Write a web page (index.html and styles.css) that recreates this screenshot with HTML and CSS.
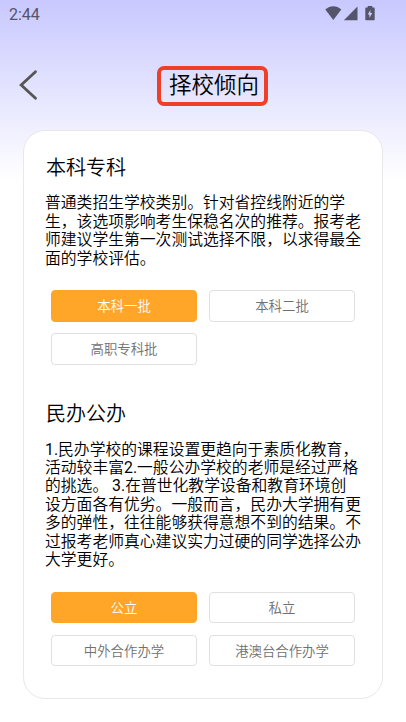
FILE: index.html
```
<!DOCTYPE html>
<html lang="zh-CN">
<head>
    <meta charset="UTF-8">
    <meta name="viewport" content="width=device-width, initial-scale=1.0">
    <title>择校倾向</title>
    <link rel="stylesheet" href="styles.css">
</head>
<body>
<div class="page">
    <!-- 状态栏 -->
    <div class="status">
        <span class="time">2:44</span>
        <svg class="statusIcons" width="50" height="16" viewBox="0 0 50 16">
            <path d="M0.3 3.6C4.8-0.9 11.8-0.9 16.3 3.6L8.3 14z"/>
            <path d="M32.5 0.6V14.2H18.9z"/>
            <path fill-rule="evenodd" d="M41 1.6h1.7V0h4.6v1.6h1.7a.7.7 0 0 1 .7.7v11.2a.7.7 0 0 1-.7.7h-8a.7.7 0 0 1-.7-.7V2.3a.7.7 0 0 1 .7-.7zM45.4 3.9L42.7 8.6h1.7v3.5l2.900-5.100h-1.900z"/>
        </svg>
    </div>

    <!-- 标题栏 -->
    <div class="header">
        <svg class="back" width="20" height="32" viewBox="0 0 20 32">
            <path d="M16.5 2.8L2.2 16L16.5 29.2"/>
        </svg>
        <h1 class="title">择校倾向</h1>
    </div>

    <div class="card">
        <h2 class="name">本科专科</h2>
        <p class="desc">普通类招生学校类别。针对省控线附近的学<br>生，该选项影响考生保稳名次的推荐。报考老<br>师建议学生第一次测试选择不限，以求得最全<br>面的学校评估。</p>
        <div class="options">
            <button class="opt active">本科一批</button>
            <button class="opt">本科二批</button>
            <button class="opt">高职专科批</button>
        </div>

        <h2 class="name second">民办公办</h2>
        <p class="desc"><span class="num">1.</span>民办学校的课程设置更趋向于素质化教育，<br>活动较丰富<span class="num">2.</span>一般公办学校的老师是经过严格<br>的挑选。<span class="num"> 3.</span>在普世化教学设备和教育环境创<br>设方面各有优劣。一般而言，民办大学拥有更<br>多的弹性，往往能够获得意想不到的结果。不<br>过报考老师真心建议实力过硬的同学选择公办<br>大学更好。</p>
        <div class="options typeOptions">
            <button class="opt active">公立</button>
            <button class="opt">私立</button>
            <button class="opt">中外合作办学</button>
            <button class="opt">港澳台合作办学</button>
        </div>
    </div>
</div>
</body>
</html>
```
FILE: styles.css
```
*{
    box-sizing: border-box;
}
body{
    margin: 0;
    background-color: #fff;
    color: #000;
    font-family: Roboto, "Noto Sans CJK SC", sans-serif;
    font-weight: 350;
}
.page{
    height: 722px;
    overflow: hidden;
    background: linear-gradient(#c8c8ff 0, #fff 180px) no-repeat;
}
.status{
    display: flex;
    justify-content: space-between;
    height: 28px;
    padding: 6px 31px 0 9px;
    color: #54546b;
}
.time{
    font-size: 16px;
    font-weight: 400;
    line-height: 17px;
}
.statusIcons{
    fill: #54546b;
}
.header{
    display: flex;
    align-items: center;
    height: 102px;
    padding: 10px 0 0 19px;
}
.back{
    margin-top: 1px;
    fill: none;
    stroke: #555;
    stroke-width: 2.8;
    stroke-linecap: round;
}
.title{
    width: 111px;
    height: 40px;
    margin: 4px 0 0 118px;
    padding-left: 3px;
    border: 4px solid #ee3f28;
    border-radius: 7px;
    font-size: 22.5px;
    font-weight: 350;
    line-height: 31px;
    text-align: center;
}
.card{
    width: 360px;
    height: 569px;
    margin-left: 23px;
    padding: 22px 0 0 21px;
    border: 1px solid #e8e8e8;
    border-radius: 22px;
    background-color: #fff;
}
.name{
    margin: 0;
    padding-left: 1px;
    font-size: 20px;
    font-weight: 350;
    line-height: 30px;
}
.second{
    margin-top: 34px;
}
.desc{
    margin: 11.4px 0 0;
    font-size: 15.8px;
    line-height: 18.4px;
    white-space: nowrap;
}
.second + .desc{
    margin-top: 12px;
}
.num{
    font-weight: 400;
}
.options{
    display: grid;
    grid-template-columns: 146px 146px;
    grid-auto-rows: 32px;
    gap: 11px 12px;
    margin: 21.6px 0 0 6px;
}
.typeOptions{
    grid-auto-rows: 31px;
    row-gap: 12px;
    margin-top: 23px;
}
.opt{
    padding: 0 0 1px;
    border: 1px solid #e0e0e0;
    border-radius: 4px;
    background-color: #fff;
    color: #707070;
    font-family: inherit;
    font-size: 13.4px;
    font-weight: 350;
}
.active{
    border-color: #ffa629;
    background-color: #ffa629;
    color: #fff;
}
```
